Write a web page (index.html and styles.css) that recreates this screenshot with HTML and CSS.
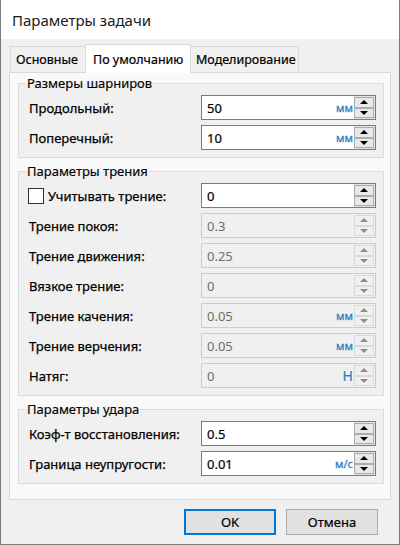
FILE: index.html
```html
<!DOCTYPE html>
<html lang="ru">
<head>
<meta charset="utf-8">
<title>Параметры задачи</title>
<link rel="stylesheet" href="styles.css">
</head>
<body>
<div class="dialog">
  <div class="titlebar">Параметры задачи</div>
  <div class="tabs">
    <div class="tab t1">Основные</div>
    <div class="tab t2 active">По умолчанию</div>
    <div class="tab t3">Моделирование</div>
  </div>
  <div class="panel">
    <fieldset class="group">
      <legend>Размеры шарниров</legend>
      <div class="row">
        <span class="label">Продольный:</span>
        <div class="spin"><span class="val">50</span><span class="unit">мм</span><span class="arrows"><span class="btn up"></span><span class="btn down"></span></span></div>
      </div>
      <div class="row">
        <span class="label">Поперечный:</span>
        <div class="spin"><span class="val">10</span><span class="unit">мм</span><span class="arrows"><span class="btn up"></span><span class="btn down"></span></span></div>
      </div>
    </fieldset>
    <fieldset class="group">
      <legend>Параметры трения</legend>
      <div class="row">
        <span class="label check"><span class="box"></span>Учитывать трение:</span>
        <div class="spin"><span class="val">0</span><span class="arrows"><span class="btn up"></span><span class="btn down"></span></span></div>
      </div>
      <div class="row">
        <span class="label">Трение покоя:</span>
        <div class="spin disabled"><span class="val">0.3</span><span class="arrows"><span class="btn up"></span><span class="btn down"></span></span></div>
      </div>
      <div class="row">
        <span class="label">Трение движения:</span>
        <div class="spin disabled"><span class="val">0.25</span><span class="arrows"><span class="btn up"></span><span class="btn down"></span></span></div>
      </div>
      <div class="row">
        <span class="label">Вязкое трение:</span>
        <div class="spin disabled"><span class="val">0</span><span class="arrows"><span class="btn up"></span><span class="btn down"></span></span></div>
      </div>
      <div class="row">
        <span class="label">Трение качения:</span>
        <div class="spin disabled"><span class="val">0.05</span><span class="unit">мм</span><span class="arrows"><span class="btn up"></span><span class="btn down"></span></span></div>
      </div>
      <div class="row">
        <span class="label">Трение верчения:</span>
        <div class="spin disabled"><span class="val">0.05</span><span class="unit">мм</span><span class="arrows"><span class="btn up"></span><span class="btn down"></span></span></div>
      </div>
      <div class="row">
        <span class="label">Натяг:</span>
        <div class="spin disabled"><span class="val">0</span><span class="unit big">Н</span><span class="arrows"><span class="btn up"></span><span class="btn down"></span></span></div>
      </div>
    </fieldset>
    <fieldset class="group">
      <legend>Параметры удара</legend>
      <div class="row">
        <span class="label">Коэф-т восстановления:</span>
        <div class="spin"><span class="val">0.5</span><span class="arrows"><span class="btn up"></span><span class="btn down"></span></span></div>
      </div>
      <div class="row">
        <span class="label">Граница неупругости:</span>
        <div class="spin"><span class="val">0.01</span><span class="unit">м/с</span><span class="arrows"><span class="btn up"></span><span class="btn down"></span></span></div>
      </div>
    </fieldset>
  </div>
  <div class="buttons">
    <button class="button default">OK</button>
    <button class="button">Отмена</button>
  </div>
</div>
</body>
</html>
```

FILE: styles.css
```css
* { box-sizing: border-box; }
html, body { margin: 0; padding: 0; }
body {
  width: 400px;
  height: 545px;
  overflow: hidden;
  background: #f0f0f0;
  font-family: "Noto Sans", "Open Sans", sans-serif;
  font-size: 13px;
  color: #000;
}
.dialog {
  width: 400px;
  height: 545px;
  display: flex;
  flex-direction: column;
  background: #f0f0f0;
  border: 1px solid #7a7a7a;
  border-top: none;
}
.titlebar {
  height: 39px;
  flex: none;
  background: #fff;
  padding-left: 11px;
  display: flex;
  align-items: center;
  font-size: 15px;
  color: #1a1a1a;
}
.tabs {
  flex: none;
  display: flex;
  align-items: flex-end;
  height: 28px;
  margin-top: 5px;
  padding-left: 9px;
}
.tab {
  height: 26px;
  padding: 0 0 0 5px;
  border: 1px solid #d9d9d9;
  border-bottom: none;
  display: flex;
  align-items: center;
  background: #f0f0f0;
  white-space: nowrap;
  font-size: 12.5px;
  -webkit-text-stroke: 0.2px #000;
}
.tab.t1 { width: 75px; border-right: none; }
.tab.t2 { width: 106px; }
.tab.t3 { width: 108px; border-left: none; padding-left: 5px; }
.tab.active {
  height: 29px;
  margin-bottom: -1px;
  background: #fff;
  position: relative;
  z-index: 1;
  padding-left: 7px;
}
.panel {
  flex: none;
  margin-left: 8px;
  width: 382px;
  height: 428px;
  border: 1px solid #d9d9d9;
  background: #f9f9f9;
  padding: 2px 6px 0 8px;
}
.group {
  margin: 0 0 5px 0;
  min-width: 0;
  border: 1px solid #dcdcdc;
  background: #f0f0f0;
  padding: 4px 7px 7px 10px;
}
.group legend {
  padding: 0 1px;
  margin-left: -3px;
  line-height: 16px;
  height: 16px;
  -webkit-text-stroke: 0.15px #000;
}
.row {
  display: flex;
  align-items: center;
  justify-content: space-between;
  height: 25px;
  margin-bottom: 5px;
}
.row:last-child { margin-bottom: 0; }
.label {
  display: flex;
  align-items: center;
  -webkit-text-stroke: 0.25px #000;
}
.check { margin-left: -1px; }
.box {
  width: 16px;
  height: 16px;
  border: 1px solid #333;
  background: #fff;
  margin-right: 4px;
}
.spin {
  width: 175px;
  height: 25px;
  display: flex;
  align-items: stretch;
  border: 1px solid #7a7a7a;
  background: #fff;
}
.val {
  flex: 1;
  padding-left: 5px;
  display: flex;
  align-items: center;
  -webkit-text-stroke: 0.2px currentColor;
}
.unit {
  display: flex;
  align-items: center;
  color: #2f7fc4;
  font-size: 11px;
  padding-right: 1px;
  -webkit-text-stroke: 0.3px #2f7fc4;
}
.unit.big { font-size: 14px; -webkit-text-stroke: 0.2px #2f7fc4; }
.arrows {
  width: 21px;
  flex: none;
  display: flex;
  flex-direction: column;
  background: #e3e3e3;
  padding: 1px 1px 1px 0;
}
.btn {
  flex: 1;
  border: 1px solid #acacac;
  background: #e8e8e8;
  display: flex;
  align-items: center;
  justify-content: center;
}
.btn.up::before {
  content: "";
  border-left: 4px solid transparent;
  border-right: 4px solid transparent;
  border-bottom: 4px solid #000;
}
.btn.down::before {
  content: "";
  border-left: 4px solid transparent;
  border-right: 4px solid transparent;
  border-top: 4px solid #000;
}
.spin.disabled {
  border-color: #cccccc;
  background: #f0f0f0;
  color: #6d6d6d;
}
.spin.disabled .val { -webkit-text-stroke: 0; }
.spin.disabled .arrows { background: #f0f0f0; }
.spin.disabled .btn { border-color: #dadada; background: #f0f0f0; }
.spin.disabled .btn.up::before { border-bottom-color: #8c8c8c; }
.spin.disabled .btn.down::before { border-top-color: #8c8c8c; }
.buttons {
  flex: none;
  display: flex;
  justify-content: flex-end;
  gap: 10px;
  margin-top: 9px;
  padding-right: 21px;
}
.button {
  width: 92px;
  height: 26px;
  border: 1px solid #adadad;
  background: #e1e1e1;
  font-family: inherit;
  font-size: 13px;
  color: #000;
  padding: 0;
  margin: 0;
  -webkit-text-stroke: 0.2px #000;
}
.button.default {
  border: 2px solid #0078d7;
}
```
